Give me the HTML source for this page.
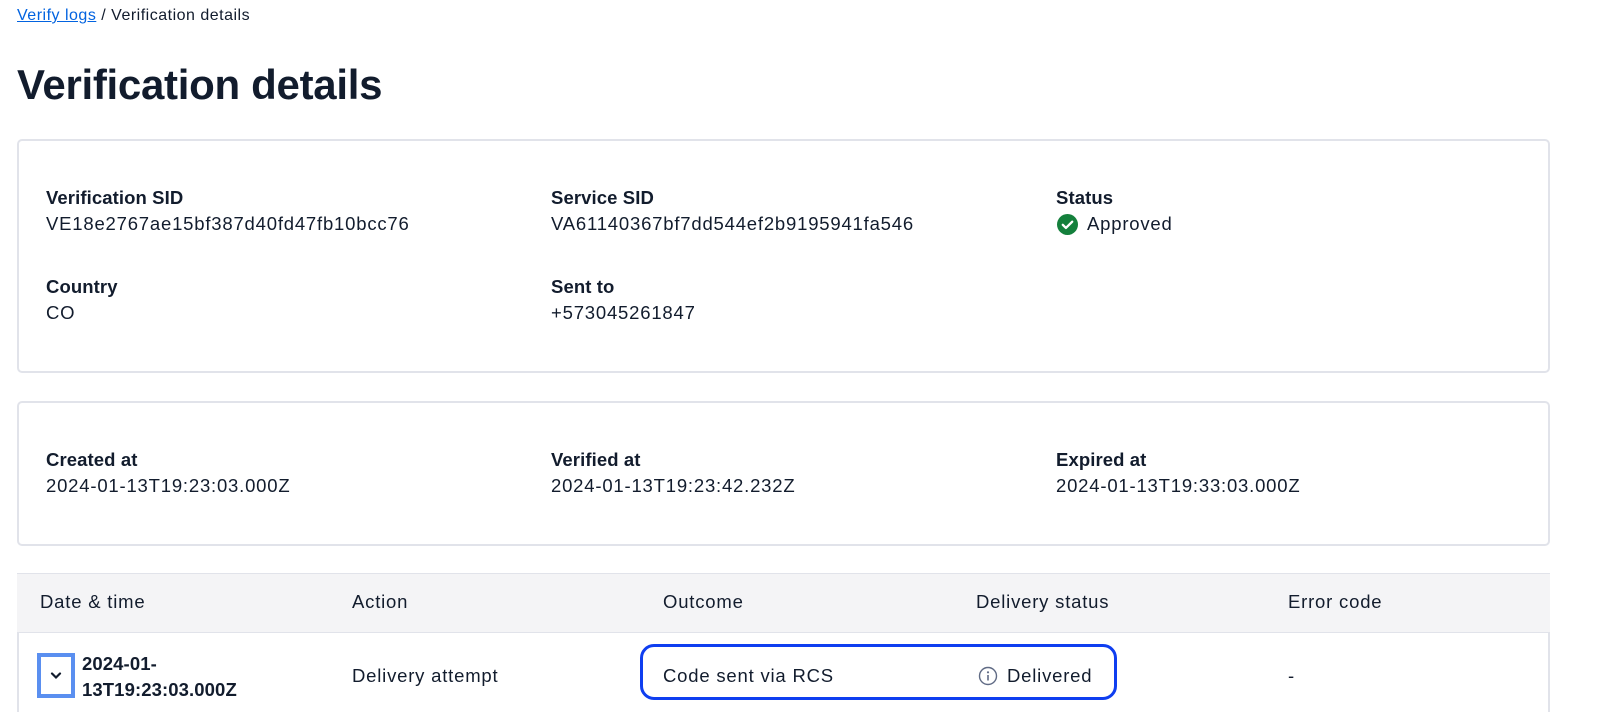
<!DOCTYPE html>
<html><head><style>
body{margin:0;width:1600px;height:712px;overflow:hidden;background:#fff;font-family:"Liberation Sans",sans-serif;color:#121c2d;}
.t{position:absolute;font-size:18.5px;line-height:24px;white-space:nowrap;letter-spacing:0.8px}
.b{font-weight:bold;letter-spacing:0.1px}
.card{position:absolute;left:17px;width:1533px;border:2px solid #e1e3ea;border-radius:5px;box-sizing:border-box}
</style></head><body>
<div class="t" style="left:17px;top:4px;font-size:16px;letter-spacing:0.5px"><span style="color:#0263e0;text-decoration:underline">Verify logs</span> / Verification details</div>
<div class="t" style="left:17px;top:59px;font-size:42px;line-height:52px;font-weight:bold;letter-spacing:-0.3px">Verification details</div>
<div class="card" style="top:139px;height:234px"></div>
<div class="card" style="top:401px;height:145px"></div>
<div class="t b" style="left:46px;top:186px">Verification SID</div>
<div class="t" style="left:46px;top:212px">VE18e2767ae15bf387d40fd47fb10bcc76</div>
<div class="t b" style="left:551px;top:186px">Service SID</div>
<div class="t" style="left:551px;top:212px">VA61140367bf7dd544ef2b9195941fa546</div>
<div class="t b" style="left:1056px;top:186px">Status</div>
<svg style="position:absolute;left:1057px;top:214px" width="21" height="21" viewBox="0 0 20 20"><circle cx="10" cy="10" r="10" fill="#14803c"/><path d="M5.5 10.3l3 3 6-6" stroke="#fff" stroke-width="2.2" fill="none" stroke-linecap="round" stroke-linejoin="round"/></svg>
<div class="t" style="left:1087px;top:212px">Approved</div>
<div class="t b" style="left:46px;top:275px">Country</div>
<div class="t" style="left:46px;top:301px">CO</div>
<div class="t b" style="left:551px;top:275px">Sent to</div>
<div class="t" style="left:551px;top:301px">+573045261847</div>
<div class="t b" style="left:46px;top:448px">Created at</div>
<div class="t" style="left:46px;top:474px">2024-01-13T19:23:03.000Z</div>
<div class="t b" style="left:551px;top:448px">Verified at</div>
<div class="t" style="left:551px;top:474px">2024-01-13T19:23:42.232Z</div>
<div class="t b" style="left:1056px;top:448px">Expired at</div>
<div class="t" style="left:1056px;top:474px">2024-01-13T19:33:03.000Z</div>
<div style="position:absolute;left:17px;top:573px;width:1533px;height:60px;background:#f4f4f6;border-top:1px solid #e1e3ea;border-bottom:1px solid #e1e3ea;box-sizing:border-box"></div>
<div style="position:absolute;left:17px;top:633px;width:2px;height:79px;background:#e1e3ea"></div>
<div style="position:absolute;left:1548px;top:633px;width:2px;height:79px;background:#e1e3ea"></div>
<div class="t" style="left:40px;top:590px">Date &amp; time</div>
<div class="t" style="left:352px;top:590px">Action</div>
<div class="t" style="left:663px;top:590px">Outcome</div>
<div class="t" style="left:976px;top:590px">Delivery status</div>
<div class="t" style="left:1288px;top:590px">Error code</div>
<div style="position:absolute;left:37px;top:653px;width:38px;height:45px;border:4px solid #5a8ff0;background:#fff;box-sizing:border-box"></div>
<svg style="position:absolute;left:50px;top:672px" width="12" height="8" viewBox="0 0 12 8"><path d="M2 1.5l4 4 4-4" stroke="#121c2d" stroke-width="2.2" fill="none" stroke-linecap="round"/></svg>
<div class="t b" style="left:82px;top:651px;line-height:26px">2024-01-<br>13T19:23:03.000Z</div>
<div class="t" style="left:352px;top:664px">Delivery attempt</div>
<div style="position:absolute;left:640px;top:644px;width:477px;height:56px;border:3px solid #0f3ef0;border-radius:14px;box-sizing:border-box"></div>
<div class="t" style="left:663px;top:664px">Code sent via RCS</div>
<svg style="position:absolute;left:978px;top:666px" width="20" height="20" viewBox="0 0 20 20"><circle cx="10" cy="10" r="8.5" stroke="#606b85" stroke-width="1.4" fill="none"/><circle cx="10" cy="6.3" r="1.1" fill="#606b85"/><path d="M10 9v5.5" stroke="#606b85" stroke-width="1.6"/></svg>
<div class="t" style="left:1007px;top:664px">Delivered</div>
<div class="t" style="left:1288px;top:664px">-</div>
</body></html>
